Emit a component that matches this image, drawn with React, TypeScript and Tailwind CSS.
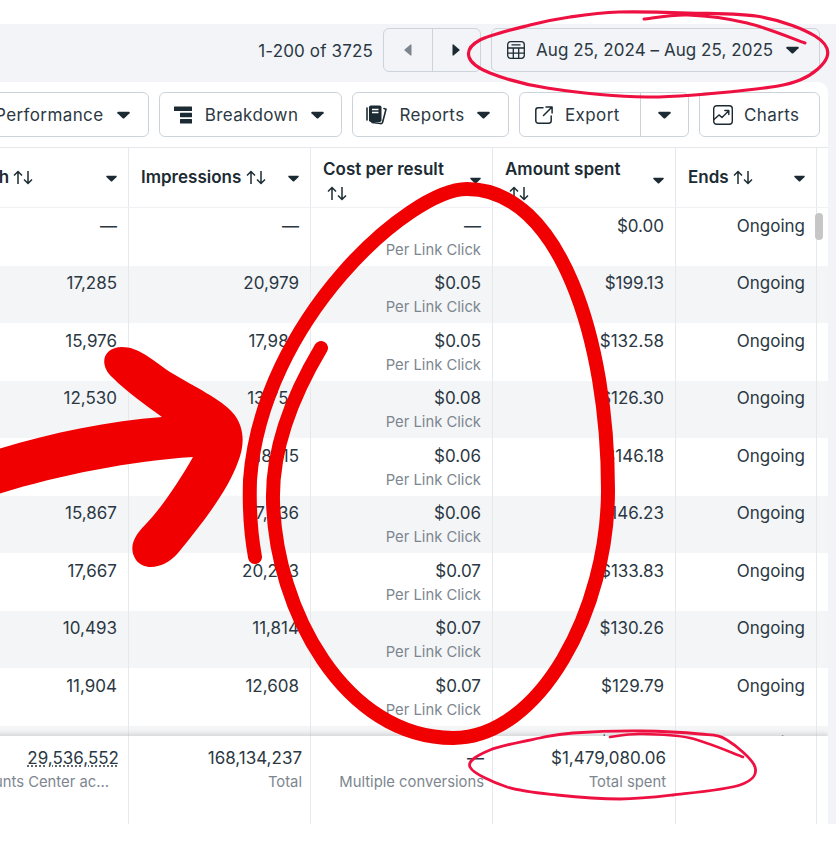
import React from "react";

type Pt = [number, number];

// catmull-rom through the points, so the thin marker strokes can be read off the picture
const smooth = (pts: Pt[], closed = false) => {
  const at = (i: number) =>
    closed ? pts[(i + pts.length) % pts.length] : pts[Math.max(0, Math.min(pts.length - 1, i))];
  const n = closed ? pts.length : pts.length - 1;
  let d = `M${pts[0][0]} ${pts[0][1]}`;
  for (let i = 0; i < n; i++) {
    const [p0, p1, p2, p3] = [at(i - 1), at(i), at(i + 1), at(i + 2)];
    const c1 = [p1[0] + (p2[0] - p0[0]) / 6, p1[1] + (p2[1] - p0[1]) / 6];
    const c2 = [p2[0] - (p3[0] - p1[0]) / 6, p2[1] - (p3[1] - p1[1]) / 6];
    d += ` C${c1[0]} ${c1[1]} ${c2[0]} ${c2[1]} ${p2[0]} ${p2[1]}`;
  }
  return d;
};

const topLoop: Pt[] = [
  [619, 12], [688, 13], [762, 17], [815, 36], [827, 57], [800, 80], [747, 90], [647, 97], [547, 88], [490, 73],
  [469, 57], [480, 40], [530, 25], [570, 17],
];
const topFlick: Pt[] = [[644, 19], [688, 15], [747, 23], [805, 43]];
const bottomLoop: Pt[] = [
  [640, 731], [700, 734], [727, 740], [755, 767], [740, 785], [673, 795], [620, 799], [557, 795], [507, 787],
  [470, 767], [490, 750], [540, 738], [573, 733],
];
const bottomFlick: Pt[] = [[610, 737], [640, 734], [690, 738], [743, 757]];

const Caret = ({ small = false, className = "" }: { small?: boolean; className?: string }) => (
  <svg viewBox="0 0 14 8" className={`${small ? "w-[11px] h-[7px]" : "w-[13px] h-[8px]"} shrink-0 ${className}`}>
    <path d="M1.2 0.5h11.6c.8 0 1.2.9.7 1.500l-5.6 5.500c-.5.4-1.3.4-1.800 0L.5 2C0 1.400.4.5 1.200.5z" fill="#1c2b33" />
  </svg>
);

const SortArrows = () => (
  <svg viewBox="0 0 20 15" fill="none" stroke="#1c2b33" strokeWidth="1.5" className="inline-block w-[20px] h-[15px] align-[-2px]">
    <path d="M5 14V2M1 5.500l4-4 4 4" />
    <path d="M15 1v12M11 9.500l4 4 4-4" />
  </svg>
);

const CalendarIcon = () => (
  <svg viewBox="0 0 18 18" fill="none" stroke="#1c2b33" strokeWidth="1.3" className="w-[18px] h-[18px] shrink-0">
    <rect x="0.7" y="0.7" width="16.6" height="16.6" rx="3" />
    <path d="M4.500 3.900h9M0.700 7h16.600M0.700 12.200h16.600M6.300 7v10.300M11.700 7v10.300" />
  </svg>
);

const BreakdownIcon = () => (
  <svg viewBox="0 0 18 18" fill="#1c2b33" className="w-[18px] h-[18px] shrink-0">
    <rect x="0" y="0.5" width="18" height="4.6" rx="0.6" />
    <rect x="6" y="6.8" width="12" height="4.4" rx="0.6" />
    <rect x="6" y="13" width="12" height="4.6" rx="0.6" />
  </svg>
);

const ReportsIcon = () => (
  <svg viewBox="0 0 21 20" className="w-[21px] h-[20px] shrink-0">
    <path d="M1 3v12" stroke="#1c2b33" strokeWidth="1.6" strokeLinecap="round" />
    <rect x="3" y="0.5" width="12.5" height="16.5" rx="1.8" fill="#1c2b33" />
    <path d="M6 4.500h6.500M6 7.500h6.500" stroke="#fff" strokeWidth="1.3" />
    <path
      d="M18 3.500l2 .7-3.400 13c-.3 1-1.200 1.600-2.200 1.300L6 17.500"
      fill="none"
      stroke="#1c2b33"
      strokeWidth="1.6"
      strokeLinecap="round"
    />
  </svg>
);

const ExportIcon = () => (
  <svg viewBox="0 0 18 18" fill="none" stroke="#1c2b33" strokeWidth="1.5" strokeLinecap="round" strokeLinejoin="round" className="w-[18px] h-[18px] shrink-0">
    <path d="M8 1.800H3.200A2.400 2.400 0 0 0 .8 4.200v10.600a2.400 2.400 0 0 0 2.400 2.400h10.600a2.400 2.400 0 0 0 2.400-2.400V10" />
    <path d="M11 .9h6.100V7M17 1L8.500 9.500" />
  </svg>
);

const ChartsIcon = () => (
  <svg viewBox="0 0 20 20" fill="none" stroke="#1c2b33" strokeWidth="1.4" strokeLinecap="round" strokeLinejoin="round" className="w-[20px] h-[20px] shrink-0">
    <rect x="0.7" y="0.7" width="18.6" height="18.6" rx="3" />
    <path d="M1 14.500l5-4.600 3 2.600 6.500-6.500M11.800 5.500h4v4" />
  </svg>
);

const Button = ({ icon, label, className }: { icon?: React.ReactNode; label: string; className: string }) => (
  <div className={`h-[45px] flex items-center justify-between shrink-0 border border-[#ccd3db] rounded-[6px] ${className}`}>
    {icon}
    <span className="pt-[2px]">{label}</span>
    <Caret />
  </div>
);

const grid = "grid grid-cols-[183px_182px_182px_183px_141px_12px]";
const cell = "border-r border-[#e6e8ec] pl-[12px] pr-[11px]";

const rows = [
  ["—", "—", "—", "$0.00"],
  ["17,285", "20,979", "$0.05", "$199.13"],
  ["15,976", "17,985", "$0.05", "$132.58"],
  ["12,530", "13,755", "$0.08", "$126.30"],
  ["14,212", "18,115", "$0.06", "$146.18"],
  ["15,867", "17,236", "$0.06", "$146.23"],
  ["17,667", "20,233", "$0.07", "$133.83"],
  ["10,493", "11,814", "$0.07", "$130.26"],
  ["11,904", "12,608", "$0.07", "$129.79"],
  ["17,593", "21,093", "$0.07", "$128.44"],
];

const HeaderCell = ({ title, wrap = false }: { title: string; wrap?: boolean }) => (
  <div className={`flex justify-between items-center ${cell}`}>
    <div className={`font-semibold leading-[24px] whitespace-nowrap ${wrap ? "mt-[6px]" : "mt-[-2px]"}`}>
      {title} {wrap && <br />}
      <span className={wrap ? "ml-[4px]" : ""}>
        <SortArrows />
      </span>
    </div>
    <Caret small className={wrap ? "mt-[6px]" : "mt-[1px]"} />
  </div>
);

export default function App() {
  return (
    <div className="relative w-[836px] h-[854px] bg-white overflow-hidden font-['Inter',sans-serif] text-[17px] text-[#2b3843]">
      <div className="h-6" />
      <div className="h-[800px] bg-[#f2f4f8]">
        {/* date bar */}
        <div className="h-[58px] flex items-start pt-[4px] justify-end pr-[16px]">
          <span className="mr-[10px] h-[44px] leading-[46px] tracking-[0.15px]">1-200 of 3725</span>
          <div className="flex h-[44px] w-[98px] mr-[10px] border border-[#ccd3db] rounded-[6px]">
            <div className="flex-1 flex items-center justify-center border-r border-[#ccd3db]">
              <svg viewBox="0 0 8 12" className="w-[8px] h-[12px]">
                <path d="M7.500 1v10c0 .6-.6.8-1 .5L.6 6.600c-.4-.3-.4-.9 0-1.200L6.500.5c.4-.3 1-.1 1 .5z" fill="#7d868f" />
              </svg>
            </div>
            <div className="flex-1 flex items-center justify-center">
              <svg viewBox="0 0 8 12" className="w-[8px] h-[12px]">
                <path d="M.5 1v10c0 .6.6.8 1 .5l5.900-4.900c.4-.3.4-.9 0-1.200L1.500.5c-.4-.3-1-.1-1 .5z" fill="#1c2b33" />
              </svg>
            </div>
          </div>
          <div className="h-[44px] w-[329px] flex items-center gap-[11px] pl-[15px] border border-[#ccd3db] rounded-[6px]">
            <CalendarIcon />
            <span className="pt-[2px] tracking-[0.05px] whitespace-nowrap">Aug 25, 2024 – Aug 25, 2025</span>
            <Caret className="ml-[2px]" />
          </div>
        </div>

        <div className="w-[828px] h-[742px] bg-white rounded-tr-[10px] overflow-hidden">
          {/* toolbar */}
          <div className="h-[66px] flex items-center justify-end gap-[10px] pr-[8px] border-b border-[#e6e8ec] tracking-[0.4px]">
            <Button label="Performance" className="w-[170px] pl-[15px] pr-[18px]" />
            <Button icon={<BreakdownIcon />} label="Breakdown" className="w-[183px] pl-[14px] pr-[17px]" />
            <Button icon={<ReportsIcon />} label="Reports" className="w-[157px] pl-[13px] pr-[18px]" />
            <div className="h-[45px] w-[170px] flex shrink-0 border border-[#ccd3db] rounded-[6px]">
              <div className="w-[121px] flex items-center gap-[12px] pl-[15px] border-r border-[#ccd3db]">
                <ExportIcon />
                <span className="pt-[2px]">Export</span>
              </div>
              <div className="flex-1 flex items-center justify-center">
                <Caret />
              </div>
            </div>
            <div className="h-[45px] w-[121px] flex items-center gap-[11px] pl-[13px] shrink-0 border border-[#ccd3db] rounded-[6px]">
              <ChartsIcon />
              <span className="pt-[2px]">Charts</span>
            </div>
          </div>

          <div className="ml-[-54px] w-[883px]">
            {/* column headers */}
            <div className={`${grid} h-[60px] border-b border-[#f0f1f4] text-[#1c2b33]`}>
              <HeaderCell title="Reach" />
              <HeaderCell title="Impressions" />
              <HeaderCell title="Cost per result" wrap />
              <HeaderCell title="Amount spent" wrap />
              <HeaderCell title="Ends" />
              <div />
            </div>

            {/* rows */}
            <div className="relative h-[528px] overflow-hidden">
              {rows.map((r, i) => (
                <div key={i} className={`${grid} h-[57.5px] text-right leading-[20px] ${i % 2 === 1 ? "bg-[#f4f5f7]" : ""}`}>
                  <div className={`${cell} pt-[7.5px]`}>{r[0]}</div>
                  <div className={`${cell} pt-[7.5px]`}>{r[1]}</div>
                  <div className={`${cell} pt-[7.5px]`}>
                    <div>{r[2]}</div>
                    <div className="mt-[4px] text-[14.8px] text-[#7d868f]">Per Link Click</div>
                  </div>
                  <div className={`${cell} pt-[7.5px]`}>{r[3]}</div>
                  <div className={`${cell} pt-[7.5px]`}>Ongoing</div>
                  <div />
                </div>
              ))}
              <div className="absolute left-[869px] top-[5px] w-[8px] h-[27px] rounded-full bg-[#c6c6c6]" />
            </div>

            {/* totals */}
            <div className={`${grid} relative h-[88px] bg-white text-right leading-[20px] shadow-[0_-2px_5px_rgba(0,0,0,0.14)]`}>
              <div className="border-r border-[#e6e8ec] pl-[12px] pr-[9px] pt-[12px]">
                <div className="underline decoration-dotted decoration-[#2b3843] underline-offset-2">29,536,552</div>
                <div className="mt-[4px] pr-[2px] text-[14.8px] text-[#7d868f] truncate">Accounts Center accounts</div>
              </div>
              <div className="border-r border-[#e6e8ec] pl-[12px] pr-[8px] pt-[12px]">
                <div>168,134,237</div>
                <div className="mt-[4px] text-[14.8px] text-[#7d868f]">Total</div>
              </div>
              <div className="border-r border-[#e6e8ec] pl-[12px] pr-[8px] pt-[12px]">
                <div>—</div>
                <div className="mt-[4px] text-[14.8px] text-[#7d868f] whitespace-nowrap">Multiple conversions</div>
              </div>
              <div className="border-r border-[#e6e8ec] pl-[12px] pr-[9px] pt-[12px]">
                <div>$1,479,080.06</div>
                <div className="mt-[4px] text-[14.8px] text-[#7d868f]">Total spent</div>
              </div>
              <div className="border-r border-[#e6e8ec]" />
              <div />
            </div>
          </div>
        </div>
      </div>

      {/* marker annotations on top of the screenshot */}
      <svg viewBox="0 0 836 854" fill="none" strokeLinecap="round" className="absolute inset-0 w-[836px] h-[854px] pointer-events-none">
        <path
          d="M-2 449C50 433 110 421 162 417C145 405 125 390 113 378C98 365 103 347 122 347C138 347 150 358 170 372C195 387 222 400 232 412C245 426 245 445 238 462C228 490 205 520 178 553C165 568 145 572 136 560C128 548 134 536 145 525C160 510 180 480 193 457C130 461 60 475 -2 494Z"
          fill="#f00000"
        />
        <path
          d="M321 348C290 400 272 450 273 500C275 610 345 738 453 738C540 738 608 610 608 490C608 340 560 189 467 189C410 189 262 320 250 480C249 510 251 535 255 557"
          stroke="#f00000"
          strokeWidth="14"
        />
        <path d={smooth(topLoop, true)} stroke="#ee1040" strokeWidth="3.2" />
        <path d={smooth(topFlick)} stroke="#ee1040" strokeWidth="3" />
        <path d={smooth(bottomLoop, true)} stroke="#ee1040" strokeWidth="2.8" />
        <path d={smooth(bottomFlick)} stroke="#ee1040" strokeWidth="2.6" />
      </svg>
    </div>
  );
}
